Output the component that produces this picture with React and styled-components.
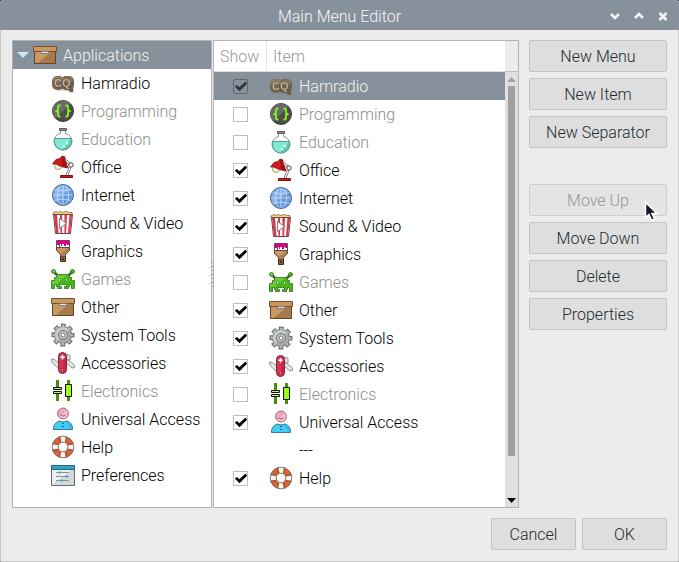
import React, { useState } from "react";
import styled, { createGlobalStyle, css } from "styled-components";

const GlobalStyle = createGlobalStyle`
  *, *::before, *::after { box-sizing: border-box; }
  html, body { margin: 0; background: #0b1f1c; }
  body, button, input, table {
    font-family: "Roboto", "Noto Sans", sans-serif;
    font-size: 16px;
    font-weight: 300;
    line-height: 20px;
  }
`;

const colors = {
  accent: "#87919b",
  window: "#ececec",
  frame: "#b3b3b3",
  button: "#dedede",
  dim: "#8e8e8e",
};

const Window = styled.main`
  display: flex;
  flex-direction: column;
  min-height: 100vh;
  background: ${colors.window};
  border-radius: 3px 3px 2px 2px;
  overflow: hidden;
`;

const TitleBar = styled.header`
  display: grid;
  grid-template-columns: 1fr auto 1fr;
  align-items: center;
  height: 30px;
  padding-top: 2px;
  background: ${colors.accent};
  color: #f6f6f6;
`;

const Title = styled.h1`
  grid-column: 2;
  margin: 0;
  padding-top: 2px;
  font-size: 16px;
  font-weight: 300;
`;

const WindowControls = styled.div`
  display: flex;
  justify-content: flex-end;
  gap: 10px;
  padding-right: 9px;
`;

const ControlButton = styled.button`
  display: grid;
  place-items: center;
  width: 14px;
  height: 20px;
  padding: 0;
  border: 0;
  background: none;
  color: #f4f4f4;
`;

const Body = styled.div`
  display: flex;
  flex: 1;
  flex-direction: column;
  gap: 10px;
  padding: 10px 11px 11px;
  border: 1px solid #c9c9c9;
  border-top: 0;
`;

const Content = styled.div`
  display: flex;
  flex: 1;
`;

const Tree = styled.ul`
  flex: 0 0 200px;
  margin: 0;
  padding: 0;
  list-style: none;
  background: #fff;
  border: 1px solid ${colors.frame};
`;

const TreeRow = styled.li`
  display: flex;
  align-items: center;
  gap: 6px;
  height: 28px;
  padding-left: 38px;
  color: ${(p) => (p.$dim ? colors.dim : "#000")};
  ${(p) =>
    p.$root &&
    css`
      padding-left: 4px;
      background: ${colors.accent};
      color: #f2f2f2;
    `}
`;

const RowText = styled.span`
  padding-top: 2px;
`;

const Expander = styled.button`
  display: grid;
  place-items: center;
  width: 12px;
  height: 20px;
  margin-right: -2px;
  padding: 0;
  border: 0;
  background: none;
`;

const PaneHandle = styled.div`
  display: flex;
  flex: 0 0 1px;
  flex-direction: column;
  align-items: center;
  justify-content: center;
  gap: 3px;
`;

const HandleDot = styled.span`
  flex: none;
  width: 1px;
  height: 1px;
  background: #8f8f8f;
`;

const ListPanel = styled.section`
  display: grid;
  flex: 1;
  grid-template-columns: 1fr 13px;
  min-width: 0;
  background: #fff;
  border: 1px solid ${colors.frame};
`;

const ItemTable = styled.table`
  align-self: start;
  width: 100%;
  border-collapse: separate;
  border-spacing: 0;
  table-layout: fixed;
`;

const HeaderCell = styled.th`
  width: ${(p) => p.$width || "auto"};
  height: 31px;
  padding: 2px 6px 0;
  border-bottom: 1px solid #dcdcdc;
  border-right: ${(p) => (p.$width ? "1px solid #e2e2e2" : "0")};
  color: #969696;
  font-weight: 300;
  text-align: left;
`;

const ItemRow = styled.tr`
  color: ${(p) => (p.$selected ? "#f2f2f2" : p.$dim ? colors.dim : "#000")};
  background: ${(p) => (p.$selected ? colors.accent : "#fff")};
`;

const Cell = styled.td`
  height: 28px;
  padding: 0 ${(p) => (p.$check ? "0" : "2px")};
`;

const CheckLine = styled.span`
  display: flex;
  justify-content: center;
`;

const ItemLabel = styled.label`
  display: flex;
  align-items: center;
  gap: 6px;
  min-height: 24px;
  padding-left: ${(p) => (p.$separator ? "30px" : "0")};
`;

const tick = (color) =>
  `url("data:image/svg+xml,%3Csvg xmlns='http://www.w3.org/2000/svg' viewBox='0 0 13 13'%3E%3Cpath d='M.8 6.600l2.200-1.500 2.300 2.100L11.500 1.600l1.500 2.200L5.500 11.300z' fill='%23${color}'/%3E%3C/svg%3E")`;

const Checkbox = styled.input`
  appearance: none;
  width: 15px;
  height: 15px;
  margin: 0;
  border: 1px solid #bdbdbd;
  background-color: #fff;
  ${(p) =>
    p.$selected &&
    css`
      border-color: #5f676e;
      border-radius: 2px;
      background-color: transparent;
    `}
  &:checked {
    background-image: ${(p) => tick(p.$selected ? "2f3438" : "000")};
  }
`;

const Scrollbar = styled.div`
  display: flex;
  flex-direction: column;
  align-items: center;
  background: #e0e0e0;
`;

const ScrollCorner = styled.div`
  align-self: stretch;
  height: 31px;
  background: ${colors.window};
  border-bottom: 1px solid #bcbcbc;
`;

const ScrollButton = styled.button`
  display: grid;
  place-items: center;
  width: 13px;
  height: 14px;
  padding: 0;
  border: 0;
  background: none;
`;

const Track = styled.div`
  flex: 1;
  width: 7px;
`;

const Thumb = styled.div`
  width: 7px;
  height: 91%;
  background: #a0a0a0;
`;

const Actions = styled.div`
  display: flex;
  flex: 0 0 148px;
  flex-direction: column;
  gap: 6px;
  padding-left: 10px;
`;

const ActionGroup = styled.div`
  position: relative;
  display: flex;
  flex-direction: column;
  gap: 6px;
  margin-bottom: 30px;
`;

const Button = styled.button`
  width: ${(p) => (p.$compact ? "85px" : "100%")};
  height: 32px;
  padding: 2px 4px 0;
  border: 1px solid #c3c3c3;
  border-radius: 2px;
  background: ${colors.button};
  color: #222b30;
  &:disabled {
    border-color: #cecece;
    background: #e4e4e4;
    color: #969696;
  }
`;

const Footer = styled.footer`
  display: flex;
  justify-content: flex-end;
  gap: 6px;
`;

const Pointer = styled.svg`
  position: absolute;
  top: 17px;
  right: 9px;
  pointer-events: none;
`;

const IconSvg = styled.svg`
  flex: none;
  display: block;
`;

const HamradioIcon = () => (
  <>
    <path d="M4 10h16l3 4v8h-4l-3-2H5z" fill="#777" opacity=".25" />
    <rect x="1" y="5" width="12" height="14" rx="5" fill="#75684f" />
    <rect x="10" y="5" width="13" height="14" rx="5" fill="#6b5e4b" />
    <path d="M16 17h6v4h-3z" fill="#6b5e4b" />
    <rect x="2" y="5.500" width="10" height="6" rx="3" fill="#90826a" />
    <rect x="12" y="5.500" width="10" height="6" rx="3" fill="#857861" />
    <text x="3" y="16" fill="#c3b398" stroke="#4a3f31" strokeWidth="1" paintOrder="stroke" fontFamily="Liberation Sans, sans-serif" fontWeight="700" fontSize="11">CQ</text>
  </>
);

const ProgrammingIcon = () => (
  <>
    <circle cx="12" cy="12" r="10.5" fill="#4d4d4d" stroke="#3c3c3c" />
    <path d="M4.5 19.5A10.5 10.5 0 0 1 19.5 4.5z" fill="#6a6a6a" />
    <path d="M9.5 6.5h-1Q7 6.500 7 8.500v2Q7 12 4.500 12 7 12 7 13.500v2q0 2 1.500 2h1M14.500 6.500h1q1.500 0 1.500 2v2q0 1.500 2.500 1.500-2.500 0-2.500 1.500v2q0 2-1.500 2h-1" fill="none" stroke="#85f813" strokeWidth="1.800" />
  </>
);

const EducationIcon = () => (
  <>
    <path d="M9.5 3.5h5v3q6.500 2 6.500 8a9 8.500 0 0 1-18 0q0-6 6.500-8z" fill="#fff" stroke="#84918f" />
    <path d="M3.500 11.500h17q1 5-2 8.500-3 3-6.500 3t-6.500-3q-3-3.500-2-8.500z" fill="#80ebd2" stroke="#579d90" />
    <path d="M20 12q1 5-2 8-2.500 2.500-7 2.500z" fill="#5fc5b0" />
    <path d="M8.500 1.500h7v2h-7z" fill="#8c8c8c" stroke="#5d5d5d" />
    <circle cx="16" cy="16" r="1.500" fill="#c6fff2" />
    <circle cx="13" cy="19" r="1.500" fill="#c6fff2" />
  </>
);

const OfficeIcon = () => (
  <>
    <path d="M14 5l6 5-4 10" fill="none" stroke="#555" strokeWidth="2.500" />
    <path d="M14 5l6 5-4 10" fill="none" stroke="#fff" strokeWidth="1.200" />
    <circle cx="7" cy="11" r="3.500" fill="#fff1c0" stroke="#777" strokeWidth=".7" />
    <path d="M1.500 9L5 4.500l4-1 2-2.500 3 1v3l3 8-5-1-4-1.500-3-1.500z" fill="#d01a1a" stroke="#781111" strokeWidth=".8" />
    <path d="M11 2l2.500.5v3l3 7L12 11z" fill="#a80d12" />
    <circle cx="20" cy="10" r="2.200" fill="#fff" stroke="#444" />
    <path d="M9.500 20.500h12v2h-12z" fill="#ca1919" stroke="#801212" />
  </>
);

const InternetIcon = () => (
  <>
    <circle cx="12" cy="12" r="10.5" fill="#6599da" />
    <path d="M4.500 19.500A10.500 10.500 0 0 1 19.500 4.500z" fill="#84b1e8" />
    <path d="M12 1.500v21M1.500 12h21M3 6.500q9 3 18 0M3 17.500q9-3 18 0" fill="none" stroke="#c9dcf5" strokeWidth=".9" />
    <ellipse cx="12" cy="12" rx="5.500" ry="10.500" fill="none" stroke="#c9dcf5" strokeWidth=".9" />
    <circle cx="12" cy="12" r="10.500" fill="none" stroke="#466a9b" />
  </>
);

const VideoIcon = () => (
  <>
    <path d="M2 4V2l3-1.500 2 1 2-1 3 1 3-1 3 1 3 0v3z" fill="#f8d783" stroke="#8a6a36" strokeWidth=".8" />
    <path d="M2.500 3.500h19l-2 19h-15z" fill="#f6f6f6" stroke="#6d4448" />
    <path d="M3 4h3l1.500 18h-2.500zM9 4h2v18H9.500zM13.500 4H16l-1 18h-1.500zM18.500 4H21l-2 18h-2z" fill="#d23a50" />
    <path d="M8.500 7.500l7 5-7 5z" fill="#fff" stroke="#666" strokeWidth=".8" />
  </>
);

const GraphicsIcon = () => (
  <>
    <path d="M9.500 16h5v6.500h-5z" fill="#8a6038" stroke="#3b2a1e" />
    <path d="M5.500 1.500h13v8h-13z" fill="#fff" stroke="#555" />
    <path d="M6 1.500h12v4.500h-2v-1h-1v2h-2V5h-2v2h-1V5H9v3H8V6H6z" fill="#da0087" />
    <path d="M5.500 8.500h13v3l-4 4v2h-5v-2l-4-4z" fill="#b08352" stroke="#66492e" />
    <path d="M6.500 9h10L10 14.500l-3.500-3z" fill="#c89b66" />
    <circle cx="12" cy="20" r="1" fill="#3b2a1e" />
  </>
);

const GamesIcon = () => (
  <>
    <path d="M2.500 4.500L7 9M21.500 4.500L17 9" stroke="#3b6b2c" strokeWidth="2.500" />
    <circle cx="2.500" cy="4.500" r="2" fill="#67cf33" stroke="#3b6b2c" strokeWidth=".8" />
    <circle cx="21.500" cy="4.500" r="2" fill="#45ba13" stroke="#3b6b2c" strokeWidth=".8" />
    <path d="M5.500 7.500h13v3h2v3h3v8h-3v-4h-2v2h-1v2h-4v-2h2v-2h-7v2h2v2h-4v-2h-1v-2h-2v4h-3v-8h3v-3h2z" fill="#45ba13" stroke="#3b6b2c" strokeWidth=".8" />
    <path d="M1 14h3v-3h2V8h10L6 17H1z" fill="#67cf33" />
    <path d="M7.500 11.500h2v2.500h-2zM14.500 11.500h2v2.500h-2z" fill="#fff" stroke="#356922" strokeWidth=".6" />
  </>
);

const BoxIcon = () => (
  <>
    <path d="M1.500 7.500h21v13h-21z" fill="#a67a4c" stroke="#654322" />
    <path d="M2 8h17L5 20H2z" fill="#c79963" />
    <path d="M.500 3.500h23v5H.500z" fill="#ca965b" stroke="#76512c" />
    <path d="M8.500 8.500h7v2h-7z" fill="#e9edf1" stroke="#747b81" />
  </>
);

const GearIcon = () => (
  <>
    <circle cx="12" cy="12" r="9.500" fill="none" stroke="#606466" strokeWidth="4" strokeDasharray="4.500 2.961" strokeDashoffset="2.250" />
    <circle cx="12" cy="12" r="8.500" fill="#a9acad" stroke="#606466" />
    <circle cx="12" cy="12" r="9" fill="none" stroke="#b4b7b8" strokeWidth="3" strokeDasharray="2.800 4.269" strokeDashoffset="1.400" />
    <path d="M6.300 17.700A8 8 0 0 1 17.700 6.300z" fill="#c8cacb" />
    <circle cx="12" cy="12" r="4.500" fill="#c3c5c6" stroke="#6e7274" />
    <circle cx="12" cy="12" r="2" fill="#fff" stroke="#777b7d" />
  </>
);

const KnifeIcon = () => (
  <>
    <path d="M8.500 18.500L1 11.500.5 8l3 .5L9 13zM15 12l6 5 2.500-.5V14L20 11l-4-3zM15 9l1-6 3 1.500V9z" fill="#e1e4e5" stroke="#85898b" strokeWidth=".9" />
    <rect x="7.500" y="1.500" width="8" height="21" rx="4" fill="#d63450" stroke="#842238" />
    <path d="M12 2q3 0 3 4v12q0 4-3 4z" fill="#c4284a" />
    <path d="M10.800 4h1.500v1.500h1.500V7h-1.500v1.500h-1.500V7H9.300V5.500h1.500z" fill="#fff" />
    <circle cx="11.500" cy="19" r="1.200" fill="#d59ca8" stroke="#741c2f" strokeWidth=".6" />
  </>
);

const ElectronicsIcon = () => (
  <>
    <path d="M5 1h3v21H5zM16 1h3v21h-3z" fill="#4c8b0b" />
    <path d="M5 11h3v1H5z" fill="#fff" />
    <path d="M2.500 8.500h8v2h-8zM2.500 12.500h8v2h-8z" fill="#bdf45b" stroke="#111" />
    <path d="M14.500 5.500h6v12h-6z" fill="#9bff1c" stroke="#111" />
  </>
);

const AccessIcon = () => (
  <>
    <circle cx="12" cy="6.500" r="5.500" fill="#f0a2b9" stroke="#a27382" />
    <path d="M8 10l8-7q2 6-3 8.500z" fill="#f9bdd0" />
    <path d="M9.500 8q2.500 2 5 0" fill="none" stroke="#94667a" />
    <path d="M2.500 22.500q-.5-6 5.500-8.500l4 1 4-1q6 2 5.500 8.500z" fill="#42cdf5" stroke="#367a9d" />
    <path d="M20.500 22L15 15q6 2 6 7z" fill="#3da4f0" />
    <path d="M11 16h2v1h-2zM11 19h2v1h-2z" fill="#17668f" />
  </>
);

const HelpIcon = () => (
  <>
    <circle cx="12" cy="12" r="8" fill="none" stroke="#f6f6f6" strokeWidth="6" />
    <circle cx="12" cy="12" r="8" fill="none" stroke="#d76535" strokeWidth="6" strokeDasharray="7.600 4.966" strokeDashoffset="-2.500" />
    <path d="M9 1.500v6M15 1.500v6M9 16.500v6M15 16.500v6M1.500 9h6M1.500 15h6M16.500 9h6M16.500 15h6" stroke="#75432e" strokeWidth=".8" />
    <circle cx="12" cy="12" r="10.800" fill="none" stroke="#745d53" strokeWidth=".8" />
    <circle cx="12" cy="12" r="4.800" fill="#fff" stroke="#745d53" strokeWidth=".8" />
  </>
);

const PreferencesIcon = () => (
  <>
    <path d="M.500 2.500h23v20H.500z" fill="#d5d8d9" stroke="#666d70" />
    <path d="M1 22L22 6H1z" fill="#eceeee" />
    <path d="M.500 2.500h23v4H.500z" fill="#2ba5c3" stroke="#276a7d" />
    <path d="M5 9.500h13M5 13.500h13M5 17.500h13" stroke="#8a9092" />
    <path d="M8.500 8v3M15.500 12v3M10.500 16v3" stroke="#27b2d4" />
  </>
);

const icons = {
  Applications: BoxIcon,
  Hamradio: HamradioIcon,
  Programming: ProgrammingIcon,
  Education: EducationIcon,
  Office: OfficeIcon,
  Internet: InternetIcon,
  "Sound & Video": VideoIcon,
  Graphics: GraphicsIcon,
  Games: GamesIcon,
  Other: BoxIcon,
  "System Tools": GearIcon,
  Accessories: KnifeIcon,
  Electronics: ElectronicsIcon,
  "Universal Access": AccessIcon,
  Help: HelpIcon,
  Preferences: PreferencesIcon,
};

function CategoryIcon({ name }) {
  const Drawing = icons[name];
  return (
    <IconSvg width="24" height="24" viewBox="0 0 24 24" aria-hidden="true">
      <Drawing />
    </IconSvg>
  );
}

const hidden = ["Programming", "Education", "Games", "Electronics"];
const categories = Object.keys(icons).slice(1);
const listed = [...categories.slice(0, 13), "---", "Help"];

const controls = [
  { label: "Minimize", path: "M1 2l4 4 4-4" },
  { label: "Maximize", path: "M1 6l4-4 4 4" },
  { label: "Close", path: "M1.500 1l7 7M8.500 1l-7 7" },
];

export default function App() {
  const [shown, setShown] = useState(() =>
    Object.fromEntries(categories.map((name) => [name, !hidden.includes(name)]))
  );
  const toggle = (name) => setShown((s) => ({ ...s, [name]: !s[name] }));

  return (
    <>
      <GlobalStyle />
      <Window>
        <TitleBar>
          <Title>Main Menu Editor</Title>
          <WindowControls>
            {controls.map((c) => (
              <ControlButton key={c.label} type="button" aria-label={c.label}>
                <svg width="10" height="9" viewBox="0 0 10 9" fill="none" stroke="currentColor" strokeWidth="2.500">
                  <path d={c.path} />
                </svg>
              </ControlButton>
            ))}
          </WindowControls>
        </TitleBar>
        <Body>
          <Content>
            <Tree aria-label="Menus">
              <TreeRow $root>
                <Expander type="button" aria-label="Collapse Applications">
                  <svg width="12" height="6" viewBox="0 0 12 6">
                    <path d="M0 0h12L6 6z" fill="#cfe4fb" />
                  </svg>
                </Expander>
                <CategoryIcon name="Applications" />
                <RowText>Applications</RowText>
              </TreeRow>
              {categories.map((name) => (
                <TreeRow key={name} $dim={!shown[name]}>
                  <CategoryIcon name={name} />
                  <RowText>{name}</RowText>
                </TreeRow>
              ))}
            </Tree>
            <PaneHandle>
              {[1, 2, 3, 4, 5, 6, 7].map((n) => (
                <HandleDot key={n} />
              ))}
            </PaneHandle>
            <ListPanel>
              <ItemTable>
                <thead>
                  <tr>
                    <HeaderCell $width="53px">Show</HeaderCell>
                    <HeaderCell>Item</HeaderCell>
                  </tr>
                </thead>
                <tbody>
                  {listed.map((name, i) => {
                    const separator = name === "---";
                    const selected = i === 0;
                    const id = `show-${i}`;
                    return (
                      <ItemRow key={name} $selected={selected} $dim={!separator && !shown[name]}>
                        <Cell $check>
                          {!separator && (
                            <CheckLine>
                              <Checkbox
                                id={id}
                                type="checkbox"
                                $selected={selected}
                                checked={shown[name]}
                                onChange={() => toggle(name)}
                              />
                            </CheckLine>
                          )}
                        </Cell>
                        <Cell>
                          <ItemLabel as={separator ? "span" : "label"} htmlFor={separator ? undefined : id} $separator={separator}>
                            {!separator && <CategoryIcon name={name} />}
                            <RowText>{name}</RowText>
                          </ItemLabel>
                        </Cell>
                      </ItemRow>
                    );
                  })}
                </tbody>
              </ItemTable>
              <Scrollbar>
                <ScrollCorner />
                <ScrollButton type="button" aria-label="Scroll up">
                  <svg width="9" height="5" viewBox="0 0 9 5">
                    <path d="M0 5h9L4.500 0z" fill="#a2a2a2" />
                  </svg>
                </ScrollButton>
                <Track>
                  <Thumb />
                </Track>
                <ScrollButton type="button" aria-label="Scroll down">
                  <svg width="9" height="5" viewBox="0 0 9 5">
                    <path d="M0 0h9L4.500 5z" fill="#000" />
                  </svg>
                </ScrollButton>
              </Scrollbar>
            </ListPanel>
            <Actions>
              <ActionGroup>
                <Button type="button">New Menu</Button>
                <Button type="button">New Item</Button>
                <Button type="button">New Separator</Button>
              </ActionGroup>
              <ActionGroup>
                <Button type="button" disabled>Move Up</Button>
                <Button type="button">Move Down</Button>
                <Button type="button">Delete</Button>
                <Button type="button">Properties</Button>
                <Pointer width="14" height="21" viewBox="0 0 14 21" aria-hidden="true">
                  <path d="M1.500 1.500v15l3.500-3 2.500 6 3-1.500-2.500-5.500H13z" fill="#14162c" stroke="#fff" strokeWidth="1.500" />
                </Pointer>
              </ActionGroup>
            </Actions>
          </Content>
          <Footer>
            <Button type="button" $compact>Cancel</Button>
            <Button type="button" $compact>OK</Button>
          </Footer>
        </Body>
      </Window>
    </>
  );
}
